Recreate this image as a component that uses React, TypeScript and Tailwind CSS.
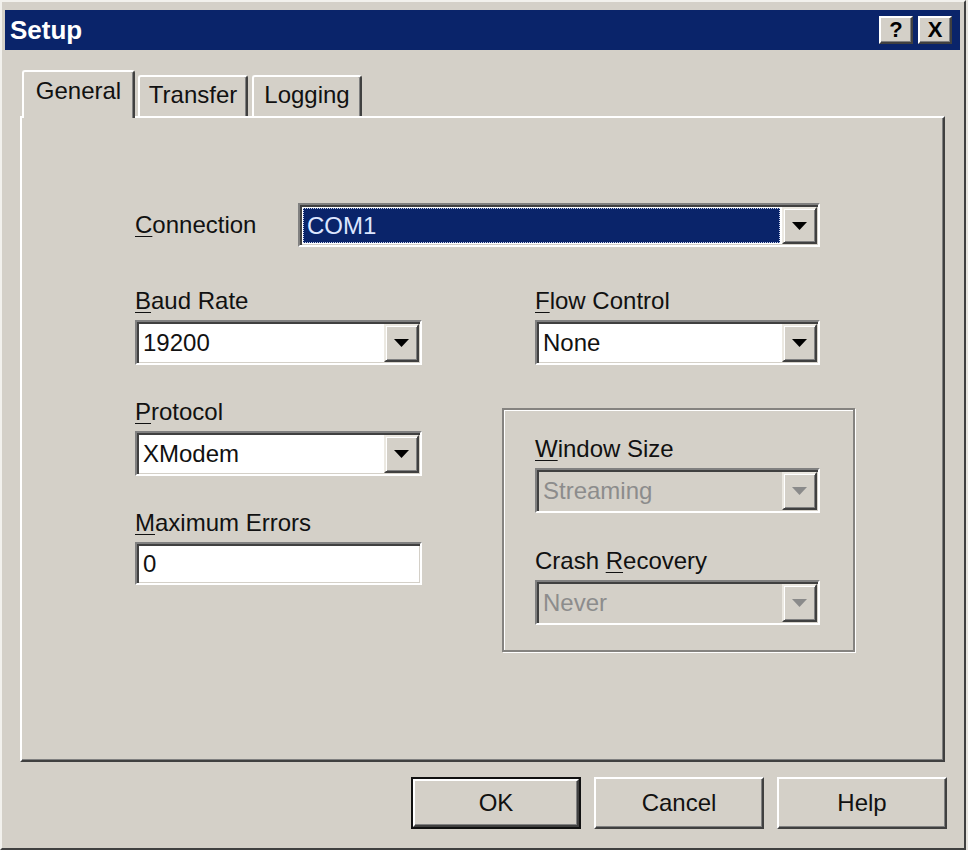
import React from "react";

const FONT = "font-['Liberation_Sans',Arial,sans-serif]";

const Key = ({ children }: { children: React.ReactNode }) => (
  <span className="underline decoration-1 underline-offset-[3px]">{children}</span>
);

const DropArrow = ({ disabled }: { disabled?: boolean }) => (
  <div className="flex w-[35px] shrink-0 items-center justify-center border-2 border-t-[#ece9e2] border-l-[#ece9e2] border-r-[#404040] border-b-[#404040] bg-[#d4d0c8] shadow-[inset_1px_1px_0_#ffffff,inset_-1px_-1px_0_#808080]">
    <svg width="15" height="8" viewBox="0 0 15 8">
      <polygon points="0,0 15,0 7.5,8" fill={disabled ? "#8a8a8a" : "#000000"} />
    </svg>
  </div>
);

type ComboProps = {
  value: string;
  disabled?: boolean;
  selected?: boolean;
  noArrow?: boolean;
  className?: string;
};

const Combo = ({ value, disabled, selected, noArrow, className = "" }: ComboProps) => (
  <div
    className={`flex border-2 border-t-[#808080] border-l-[#808080] border-r-white border-b-white pt-[2px] pl-[2px] pr-[1px] pb-[1px] shadow-[inset_2px_2px_0_#404040,inset_-1px_-1px_0_#d4d0c8] ${
      disabled ? "bg-[#d4d0c8]" : "bg-white"
    } ${className}`}
  >
    {selected ? (
      <div className="mr-[2px] ml-[1px] my-[1px] flex flex-1 items-center border border-dotted border-[#c9d2ee] bg-[#0a246a] pl-[3px] text-[24px] leading-none text-[#dde6ff]">
        {value}
      </div>
    ) : (
      <div
        className={`flex flex-1 items-center pl-[4px] text-[24px] leading-none ${
          disabled ? "text-[#8c8c8c]" : "text-[#111111]"
        }`}
      >
        {value}
      </div>
    )}
    {!noArrow && <DropArrow disabled={disabled} />}
  </div>
);

const Field = ({
  label,
  value,
  disabled,
  noArrow,
  height = "h-[45px]",
}: {
  label: React.ReactNode;
  value: string;
  disabled?: boolean;
  noArrow?: boolean;
  height?: string;
}) => (
  <div className="flex flex-col">
    <div className="text-[24px] leading-[32px] text-[#111111]">{label}</div>
    <Combo value={value} disabled={disabled} noArrow={noArrow} className={`mt-[3px] ${height}`} />
  </div>
);

const Button = ({ label, isDefault }: { label: string; isDefault?: boolean }) => (
  <div className={`h-[52px] w-[170px] ${isDefault ? "border-2 border-[#111111]" : ""}`}>
    <div className="flex h-full items-center justify-center border-2 border-t-white border-l-white border-r-[#404040] border-b-[#404040] bg-[#d4d0c8] text-[24px] leading-none text-[#111111] shadow-[inset_-1px_-1px_0_#808080]">
      {label}
    </div>
  </div>
);

const TitleButton = ({ children }: { children: React.ReactNode }) => (
  <div className="flex h-[28px] w-[34px] items-center justify-center border-2 border-t-white border-l-white border-r-[#404040] border-b-[#404040] bg-[#d4d0c8] text-[22px] font-bold leading-none text-black shadow-[inset_-1px_-1px_0_#808080]">
    {children}
  </div>
);

const Tab = ({ label, active, className = "" }: { label: string; active?: boolean; className?: string }) => (
  <div
    className={`flex justify-center rounded-t-[3px] border-2 border-b-0 border-t-white border-l-white border-r-[#404040] bg-[#d4d0c8] text-[24px] leading-[32px] text-[#111111] shadow-[inset_-1px_0_0_#808080] ${
      active ? "relative z-10 -mb-[2px] h-[48px] w-[113px] pt-[3px]" : "h-[41px] w-[110px] pt-[2px]"
    } ${className}`}
  >
    {label}
  </div>
);

export default function App() {
  return (
    <div className={`h-[850px] w-[968px] bg-[#e6e4df] ${FONT}`}>
      <div className="flex h-[850px] w-[966px] flex-col border-2 border-t-[#f2f1ed] border-l-[#f2f1ed] border-r-[#404040] border-b-[#404040] bg-[#d4d0c8] pt-[8px] pl-[3px] pr-[4px]">
        {/* title bar */}
        <div className="flex h-[40px] items-center justify-between bg-[#0a246a] pl-[5px] pr-[8px]">
          <span className="text-[26px] font-bold leading-none text-white">Setup</span>
          <div className="flex gap-[5px]">
            <TitleButton>?</TitleButton>
            <TitleButton>X</TitleButton>
          </div>
        </div>

        <div className="flex flex-col px-[15px] pt-[20px]">
          {/* tabs */}
          <div className="flex items-end pl-[2px]">
            <Tab label="General" active />
            <Tab label="Transfer" className="ml-[3px]" />
            <Tab label="Logging" className="ml-[4px]" />
          </div>

          {/* tab page */}
          <div className="h-[646px] border-2 border-t-white border-l-white border-r-[#404040] border-b-[#404040] pt-[85px] pl-[113px] shadow-[inset_-1px_-1px_0_#808080]">
            <div className="flex items-center">
              <div className="w-[163px] text-[24px] leading-[32px] text-[#111111]">
                <Key>C</Key>onnection
              </div>
              <Combo value="COM1" selected className="h-[44px] w-[522px]" />
            </div>

            <div className="mt-[38px] flex">
              <div className="flex w-[287px] flex-col gap-[31px]">
                <Field label={<><Key>B</Key>aud Rate</>} value="19200" />
                <Field label={<><Key>P</Key>rotocol</>} value="XModem" />
                <Field label={<><Key>M</Key>aximum Errors</>} value="0" noArrow height="h-[43px]" />
              </div>

              <div className="ml-[80px] flex w-[353px] flex-col">
                <div className="pl-[33px] pr-[35px]">
                  <Field label={<><Key>F</Key>low Control</>} value="None" />
                </div>
                <div className="mt-[43px] flex flex-col gap-[32px] border-2 border-[#858380] pt-[23px] pb-[25px] pl-[31px] pr-[33px] shadow-[inset_1px_1px_0_#ffffff,1px_1px_0_#ffffff]">
                  <Field label={<><Key>W</Key>indow Size</>} value="Streaming" disabled />
                  <Field label={<>Crash <Key>R</Key>ecovery</>} value="Never" disabled />
                </div>
              </div>
            </div>
          </div>

          {/* buttons */}
          <div className="-mr-[2px] mt-[15px] flex justify-end gap-[13px]">
            <Button label="OK" isDefault />
            <Button label="Cancel" />
            <Button label="Help" />
          </div>
        </div>
      </div>
    </div>
  );
}
